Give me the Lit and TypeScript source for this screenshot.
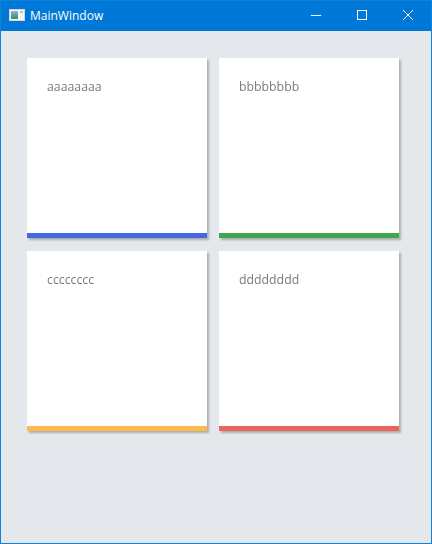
import { LitElement, css, html } from 'lit';
import { customElement } from 'lit/decorators.js';

const CARDS = [
  { label: 'aaaaaaaa', color: '#4169e1' },
  { label: 'bbbbbbbb', color: '#3ea84f' },
  { label: 'cccccccc', color: '#fcb94d' },
  { label: 'dddddddd', color: '#e8665a' },
];

@customElement('app-root')
export class AppRoot extends LitElement {
  render() {
    return html`
      <div class="window">
        <div class="titlebar">
          <svg class="app-icon" width="16" height="16" viewBox="0 0 16 16">
            <defs>
              <linearGradient id="pane" x1="0" y1="0" x2="0" y2="1">
                <stop offset="0" stop-color="#9db8d0" />
                <stop offset="0.5" stop-color="#5f9a9a" />
                <stop offset="1" stop-color="#3f8f6f" />
              </linearGradient>
            </defs>
            <rect x="0.5" y="2.5" width="15" height="11" fill="#f4f6f6" stroke="#cfd8dc" />
            <rect x="2" y="4" width="7" height="8" fill="url(#pane)" />
            <rect x="11" y="4" width="3" height="2" fill="#a9c8ce" />
          </svg>
          <span class="title">MainWindow</span>
          <div class="controls">
            <div class="control">
              <svg width="10" height="10" viewBox="0 0 10 10"><path d="M0 5.5H10" stroke="#fff" /></svg>
            </div>
            <div class="control">
              <svg width="10" height="10" viewBox="0 0 10 10"><rect x="0.5" y="0.5" width="9" height="9" fill="none" stroke="#fff" /></svg>
            </div>
            <div class="control">
              <svg width="10" height="10" viewBox="0 0 10 10"><path d="M0 0L10 10M10 0L0 10" stroke="#fff" /></svg>
            </div>
          </div>
        </div>
        <div class="content">
          ${CARDS.map(
            (c) => html`
              <div class="card">
                <div class="label">${c.label}</div>
                <div class="bar" style="background:${c.color}"></div>
              </div>
            `
          )}
        </div>
      </div>
    `;
  }

  static styles = css`
    :host {
      display: block;
    }
    .window {
      box-sizing: border-box;
      display: flex;
      flex-direction: column;
      width: 432px;
      height: 544px;
      border: 1px solid #0e83dd;
      background: #e4e7ec;
      font-family: 'Open Sans', 'Noto Sans', sans-serif;
    }
    .titlebar {
      display: flex;
      align-items: center;
      height: 28px;
      padding: 0 0 2px 8px;
      background: #0078d7;
      color: #fff;
    }
    .app-icon {
      margin-right: 5px;
    }
    .title {
      font-size: 12px;
    }
    .controls {
      display: flex;
      margin-left: auto;
    }
    .control {
      display: flex;
      align-items: center;
      justify-content: center;
      width: 46px;
      height: 28px;
    }
    .content {
      display: grid;
      grid-template-columns: 180px 180px;
      grid-auto-rows: 180px;
      column-gap: 12px;
      row-gap: 13px;
      padding: 27px 0 0 26px;
    }
    .card {
      display: flex;
      flex-direction: column;
      background: #fff;
      box-shadow: 2px 2px 2px #adadad;
    }
    .label {
      flex: 1;
      padding: 20px 20px 0;
      font-size: 12.3px;
      line-height: 18px;
      color: #7a7a7a;
      will-change: opacity;
    }
    .bar {
      height: 5px;
    }
  `;
}

declare global {
  interface HTMLElementTagNameMap {
    'app-root': AppRoot;
  }
}
